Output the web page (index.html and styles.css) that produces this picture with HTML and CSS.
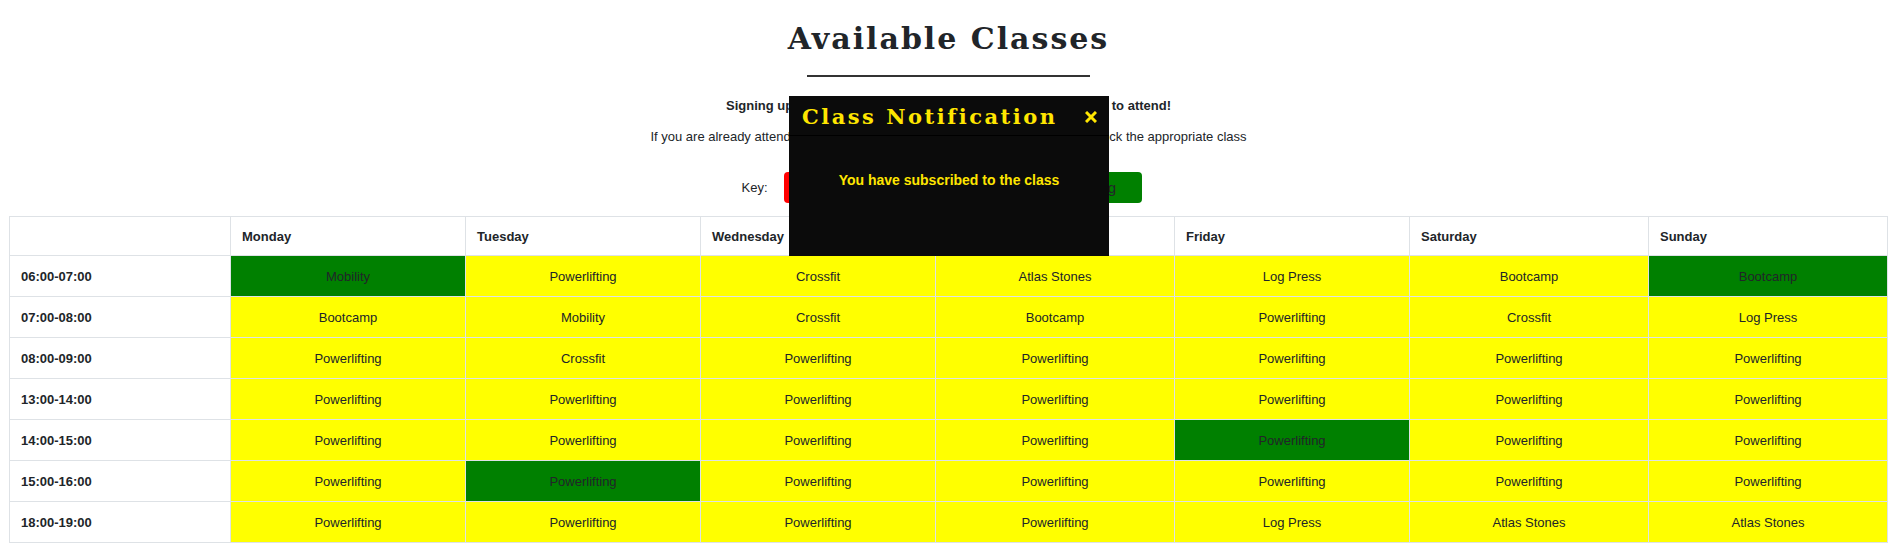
FILE: index.html
```html
<!DOCTYPE html>
<html lang="en">
<head>
<meta charset="utf-8">
<title>Available Classes</title>
<link rel="stylesheet" href="styles.css">
</head>
<body>
<div class="page">
  <h1 class="title">Available Classes</h1>
  <div class="rule"></div>
  <p class="lead">Signing up is simple, simply click on any class you would like to attend!</p>
  <p class="info">If you are already attending a class and would like to unsubscribe from it, just click the appropriate class</p>
  <div class="key">
    <span class="key-label">Key:</span>
    <span class="key-btn full">Full</span>
    <span class="key-btn open">Available</span>
    <span class="key-btn attending">Attending</span>
  </div>
  <table class="timetable">
    <colgroup>
      <col class="c-time"><col class="c-a"><col class="c-a"><col class="c-a"><col class="c-b"><col class="c-a"><col class="c-b"><col class="c-b">
    </colgroup>
    <thead>
      <tr><th></th><th>Monday</th><th>Tuesday</th><th>Wednesday</th><th>Thursday</th><th>Friday</th><th>Saturday</th><th>Sunday</th></tr>
    </thead>
    <tbody>
      <tr><th>06:00-07:00</th><td class="on">Mobility</td><td>Powerlifting</td><td>Crossfit</td><td>Atlas Stones</td><td>Log Press</td><td>Bootcamp</td><td class="on">Bootcamp</td></tr>
      <tr><th>07:00-08:00</th><td>Bootcamp</td><td>Mobility</td><td>Crossfit</td><td>Bootcamp</td><td>Powerlifting</td><td>Crossfit</td><td>Log Press</td></tr>
      <tr><th>08:00-09:00</th><td>Powerlifting</td><td>Crossfit</td><td>Powerlifting</td><td>Powerlifting</td><td>Powerlifting</td><td>Powerlifting</td><td>Powerlifting</td></tr>
      <tr><th>13:00-14:00</th><td>Powerlifting</td><td>Powerlifting</td><td>Powerlifting</td><td>Powerlifting</td><td>Powerlifting</td><td>Powerlifting</td><td>Powerlifting</td></tr>
      <tr><th>14:00-15:00</th><td>Powerlifting</td><td>Powerlifting</td><td>Powerlifting</td><td>Powerlifting</td><td class="on">Powerlifting</td><td>Powerlifting</td><td>Powerlifting</td></tr>
      <tr><th>15:00-16:00</th><td>Powerlifting</td><td class="on">Powerlifting</td><td>Powerlifting</td><td>Powerlifting</td><td>Powerlifting</td><td>Powerlifting</td><td>Powerlifting</td></tr>
      <tr><th>18:00-19:00</th><td>Powerlifting</td><td>Powerlifting</td><td>Powerlifting</td><td>Powerlifting</td><td>Log Press</td><td>Atlas Stones</td><td>Atlas Stones</td></tr>
    </tbody>
  </table>

  <div class="modal">
    <div class="modal-head">
      <span class="modal-title">Class Notification</span>
      <span class="modal-close" aria-label="Close">
        <svg width="12" height="12" viewBox="0 0 12 12"><path d="M1 1 L11 11 M11 1 L1 11" stroke="#ffe600" stroke-width="3" fill="none"/></svg>
      </span>
    </div>
    <div class="modal-body">You have subscribed to the class</div>
  </div>
</div>
</body>
</html>
```

FILE: styles.css
```css
* { box-sizing: border-box; }

html, body {
  margin: 0;
  padding: 0;
  background: #ffffff;
}

body {
  font-family: "Liberation Sans", Arial, sans-serif;
  font-size: 13px;
  color: #212529;
}

.page {
  position: relative;
  margin-left: 9px;
  display: flex;
  flex-direction: column;
  align-items: center;
}

.title {
  margin: 0;
  padding-top: 21px;
  font-family: "DejaVu Serif", serif;
  font-weight: bold;
  font-size: 30px;
  line-height: 35px;
  color: #212529;
  letter-spacing: 2px;
}

.rule {
  width: 283px;
  height: 2px;
  margin-top: 19px;
  background: #333333;
}

.lead {
  margin: 19px 0 0;
  line-height: 20px;
  font-weight: bold;
}

.info {
  margin: 11px 0 0;
  line-height: 20px;
}

.key {
  margin-top: 25px;
  display: flex;
  align-items: center;
  gap: 8px;
  padding-right: 14px;
}

.key-label {
  margin-right: 8px;
}

.key-btn {
  width: 114px;
  height: 31px;
  border-radius: 4px;
  display: flex;
  align-items: center;
  justify-content: center;
  font-size: 15px;
  color: #212529;
}

.key-btn.full { background: #ff0000; }
.key-btn.open { background: #ffff00; }
.key-btn.attending { background: #008000; }

.timetable {
  margin-top: 13px;
  align-self: flex-start;
  width: 1878px;
  table-layout: fixed;
  border-collapse: collapse;
  border: 1px solid #dee2e6;
}

.c-time { width: 221px; }
.c-a { width: 235px; }
.c-b { width: 239px; }

.timetable th,
.timetable td {
  border: 1px solid #dee2e6;
  padding: 0 11px;
  vertical-align: middle;
}

.timetable thead tr { height: 39px; }
.timetable tbody tr { height: 41px; }

.timetable th {
  text-align: left;
  font-weight: bold;
}

.timetable td {
  text-align: center;
  background: #ffff00;
}

.timetable td.on {
  background: #008000;
}

.modal {
  position: absolute;
  left: 780px;
  top: 96px;
  width: 320px;
  height: 160px;
  background: #0b0b0b;
}

.modal-head {
  height: 40px;
  display: flex;
  align-items: center;
  justify-content: space-between;
  padding: 0 12px 0 13px;
  border-bottom: 1px solid #000000;
}

.modal-title {
  font-family: "DejaVu Serif", serif;
  font-weight: bold;
  font-size: 21px;
  line-height: 24px;
  color: #ffe600;
  letter-spacing: 2.5px;
  padding-top: 2px;
}

.modal-close {
  display: flex;
  padding-top: 2px;
}

.modal-body {
  padding-top: 35px;
  text-align: center;
  font-weight: bold;
  font-size: 14px;
  line-height: 18px;
  color: #ffe600;
}
```
